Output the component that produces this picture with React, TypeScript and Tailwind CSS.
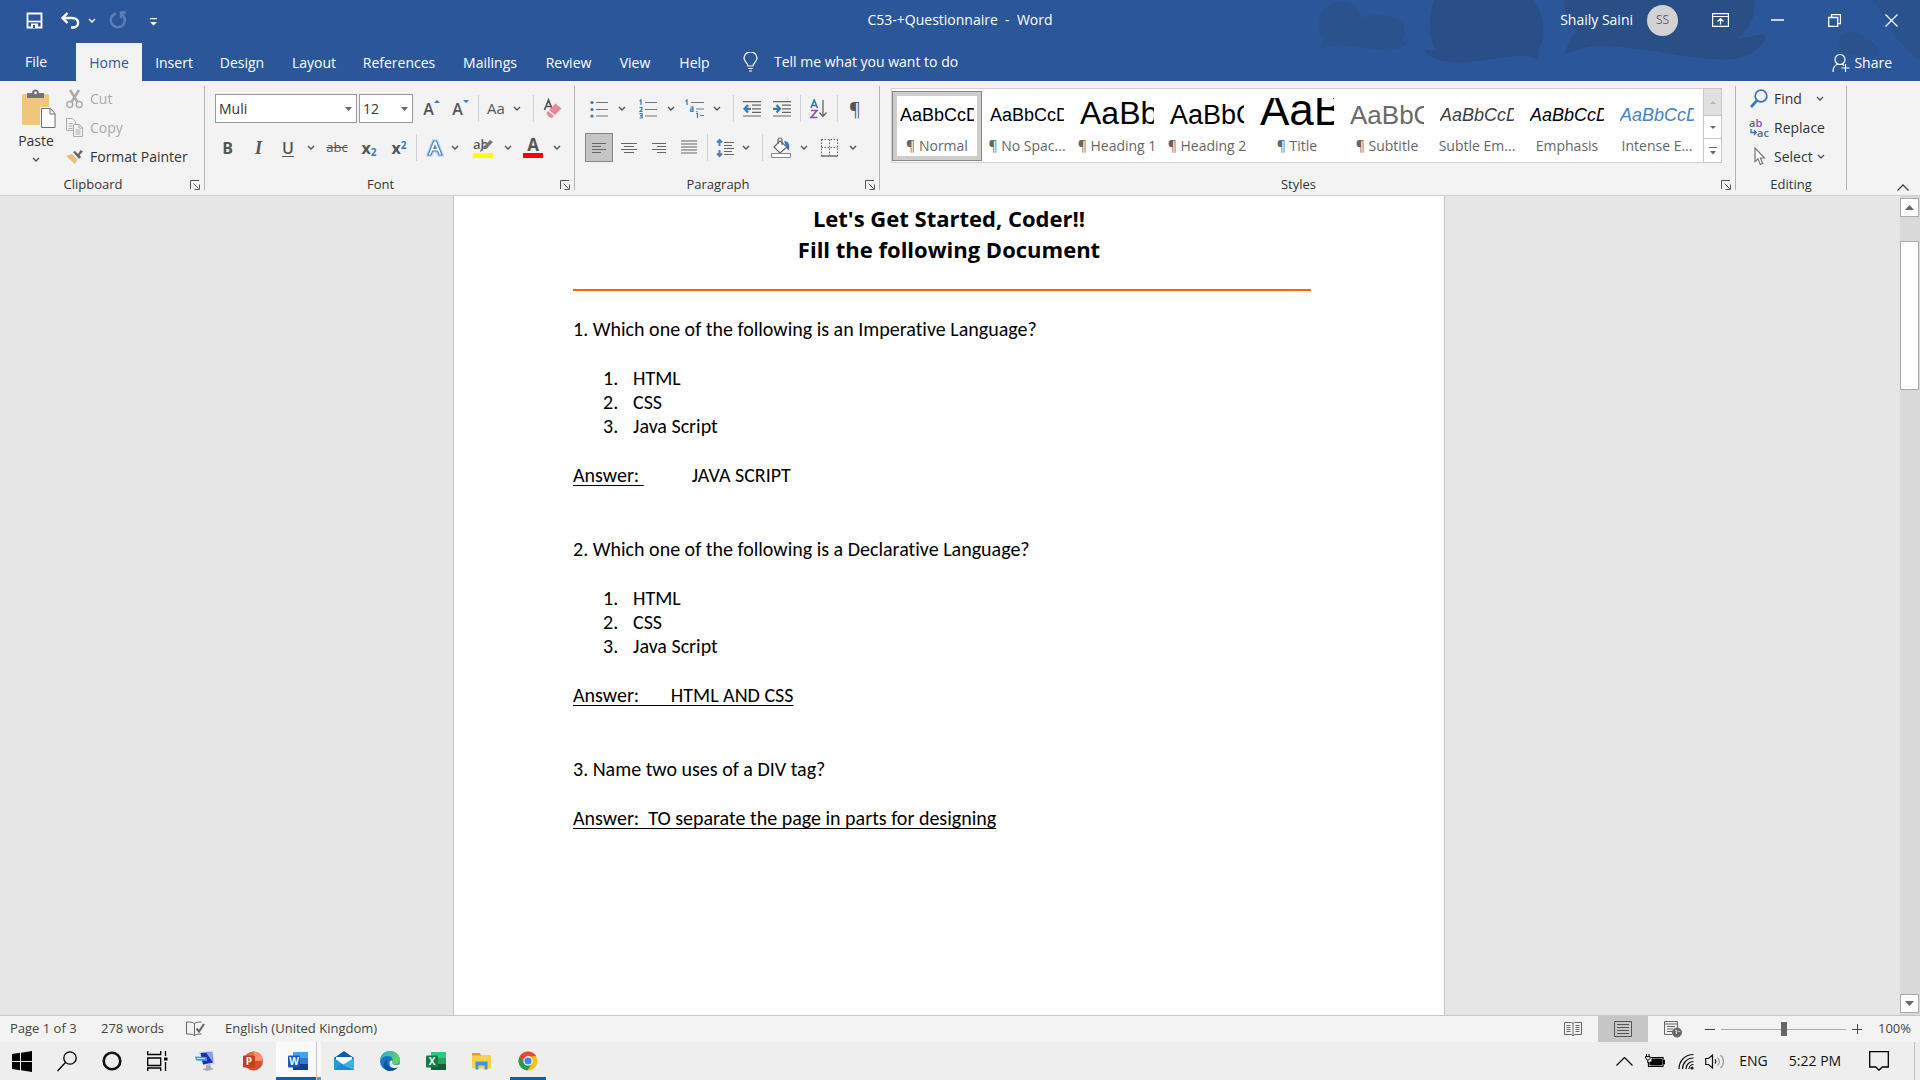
import React, { type ReactNode } from "react";

const UI = "font-['Open_Sans','Noto_Sans',sans-serif]";

function Chevron({ color = "#555" }: { color?: string }) {
  return (
    <svg width="8" height="5" viewBox="0 0 8 5" fill="none" className="shrink-0">
      <path d="M1 1l3 3 3-3" stroke={color} strokeWidth="1.4" />
    </svg>
  );
}

function Tool({ label, w, children, active = false }: { label: string; w: string; children: ReactNode; active?: boolean }) {
  return (
    <button
      type="button"
      aria-label={label}
      className={`flex h-[29px] shrink-0 items-center justify-center text-[#555] ${w} ${active ? "border border-[#868686] bg-[#c5c5c5]" : ""}`}
    >
      {children}
    </button>
  );
}

function Drop({ label, w }: { label: string; w: string }) {
  return (
    <Tool label={label} w={w}>
      <Chevron />
    </Tool>
  );
}

function Sep({ m = "" }: { m?: string }) {
  return <span className={`h-[27px] w-px shrink-0 bg-[#d2d2d2] ${m}`} />;
}

function Group({ title, w, children, launcher = true }: { title: string; w: string; children: ReactNode; launcher?: boolean }) {
  return (
    <section aria-label={title} className={`flex shrink-0 ${w}`}>
      <div className="flex min-w-0 flex-1 flex-col">
        <div className="flex-1">{children}</div>
        <div className="flex h-5 items-center">
          <span className={`flex-1 text-center text-[13px] text-[#333] ${launcher ? "pr-1" : ""}`}>{title}</span>
          {launcher && (
            <button type="button" aria-label={`${title} settings`} className="w-[14px]">
              <svg width="10" height="10" viewBox="0 0 10 10" fill="none" stroke="#555">
                <path d="M.5 9V.5H9M3.500 3.500l5 5M9.500 4.500v5h-5" />
              </svg>
            </button>
          )}
        </div>
      </div>
      <span className="mt-[5px] mb-[5px] w-px bg-[#b4b4b4]" />
    </section>
  );
}

/* ---------- Title bar ---------- */

function HeaderArt() {
  return (
    <svg className="absolute top-0 right-0 h-[81px] w-[640px] opacity-90" viewBox="0 0 640 81" fill="#2a4e84">
      <path d="M39 30C37 10 50 2 62 2c12 0 18 8 20 16 10-6 40-2 42 8 2 8-2 14-2 15 4 0 6 0 5 2-4 6-18 9-36 6-20-3-38-6-51 0 2-6 4-9 5-12-4-2-6-4-6-7z" opacity=".6" />
      <path d="M154 0h100c6 10 10 20 9 34-1 10-3 14-5 17 2 2 0 6 0 9-8-6-24-4-46-1-20 3-50 8-67-6l-1-4c6 2 10 1 12 1-10-16-6-36-2-50z" opacity=".9" />
      <path d="M284 0h190c2 14-2 26-16 38 14 0 18-4 26-3 4 2-1 8-5 12-8 10-24 14-50 12-40-4-80-14-110-13-16 1-26 4-34 9 2-12 8-20 12-25-8-4-12-14-13-30z" />
      <path d="M560 38c4-8 20-8 26 2 8 1 14 8 14 15-14 4-34 0-42-6-2-4 0-8 2-11zM592 0h48v60c-12-8-24-20-30-34-6-10-12-18-18-26z" opacity=".6" />
    </svg>
  );
}

function TitleBar() {
  return (
    <div className="relative flex h-10 items-center text-white">
      <div className="flex flex-1 items-center">
        <button type="button" aria-label="Save" className="ml-[26px] w-[34px]">
          <svg width="17" height="17" viewBox="0 0 17 17" fill="none" stroke="#fff">
            <path d="M1.500 1.500h14v14h-14z" strokeWidth="1.800" />
            <path d="M2 9.500h13" strokeWidth="1.600" />
            <path d="M5 11.500h7v4H5z" fill="#fff" stroke="none" />
            <path d="M7 13h2v3H7z" fill="#2b579a" stroke="none" />
          </svg>
        </button>
        <button type="button" aria-label="Undo" className="w-7">
          <svg width="20" height="17" viewBox="0 0 20 17" fill="none" stroke="#fff">
            <path d="M3 6h9c8 0 8 9 1 9.500h-2" strokeWidth="2.400" />
            <path d="M7.500 1L2.500 6l5 5" strokeWidth="2.400" />
          </svg>
        </button>
        <button type="button" aria-label="Undo history" className="w-[21px]"><Chevron color="#fff" /></button>
        <button type="button" aria-label="Repeat" className="w-[41px]">
          <svg width="18" height="18" viewBox="0 0 18 18" fill="none" stroke="#5d7fb4" strokeWidth="2.400">
            <path d="M7 2.500a7 7 0 1 0 5.500.8" />
            <path d="M17 1.500h-5v6" />
          </svg>
        </button>
        <button type="button" aria-label="Customise quick access" className="flex pt-1">
          <svg width="7" height="8" viewBox="0 0 7 8" fill="#fff"><path d="M0 0h7v1.200H0zM0 4h7L3.500 7.500z" /></svg>
        </button>
      </div>
      <h1 className="text-sm whitespace-pre">C53-+Questionnaire  -  Word</h1>
      <div className="relative flex flex-1 items-center justify-end">
        <span className="mr-3.5 text-sm">Shaily Saini</span>
        <button type="button" aria-label="Account" className="mr-[14px] flex size-[31px] items-center justify-center rounded-full bg-[#d2d2d2] text-[12px] text-[#666]">SS</button>
        <button type="button" aria-label="Ribbon display options" className="flex w-[57px] justify-center">
          <svg width="17" height="14" viewBox="0 0 17 14" fill="none" stroke="#fff" strokeWidth="1.200">
            <path d="M.6.6h15.800v12.800H.6zM.6 3.500h15.800M8.500 11.500V6M5.500 8.500l3-3 3 3" />
          </svg>
        </button>
        <button type="button" aria-label="Minimise" className="flex w-[57px] justify-center">
          <svg width="13" height="2" viewBox="0 0 13 2"><path d="M0 1h13" stroke="#fff" strokeWidth="1.500" /></svg>
        </button>
        <button type="button" aria-label="Restore" className="flex w-[57px] justify-center">
          <svg width="13" height="13" viewBox="0 0 13 13" fill="none" stroke="#fff" strokeWidth="1.300">
            <path d="M.7 3.500h9v9h-9zM3.500 3.500V.7h9v9H9.700" />
          </svg>
        </button>
        <button type="button" aria-label="Close" className="flex w-[57px] justify-center">
          <svg width="13" height="13" viewBox="0 0 13 13" stroke="#fff" strokeWidth="1.300"><path d="M.5.5l12 12M12.500.5l-12 12" /></svg>
        </button>
      </div>
    </div>
  );
}

const tabs = [
  { name: "Home", w: "w-[66px]" },
  { name: "Insert", w: "w-[64px]" },
  { name: "Design", w: "w-[72px]" },
  { name: "Layout", w: "w-[72px]" },
  { name: "References", w: "w-[98px]" },
  { name: "Mailings", w: "w-[84px]" },
  { name: "Review", w: "w-[73px]" },
  { name: "View", w: "w-[60px]" },
  { name: "Help", w: "w-[59px]" },
];

function TabBar() {
  return (
    <nav className="relative flex h-[41px] items-end text-sm text-white">
      <button type="button" className="h-[38px] w-[76px] pr-1">File</button>
      {tabs.map((t, i) => (
        <button key={t.name} type="button" className={`h-[38px] pt-0.5 ${t.w} ${i === 0 ? "bg-[#f3f3f3] text-[#2b579a]" : ""}`}>
          {t.name}
        </button>
      ))}
      <label className="flex h-[38px] flex-1 items-center pl-[19px]">
        <svg width="15" height="20" viewBox="0 0 15 20" fill="none" stroke="#fff" strokeWidth="1.200">
          <path d="M5 14c0-3-4-4-4-8a6.500 6 0 0 1 13 0c0 4-4 5-4 8zM5 16.500h5M6 19h3" />
        </svg>
        <input aria-label="Tell me what you want to do" placeholder="Tell me what you want to do" className="ml-4 w-60 bg-transparent outline-none placeholder:text-white" />
      </label>
      <button type="button" className="mr-[28px] flex h-[38px] items-center gap-1 pt-0.5">
        <svg width="18" height="20" viewBox="0 0 18 20" fill="none" stroke="#fff" strokeWidth="1.200">
          <circle cx="8" cy="6.500" r="5" />
          <path d="M1 19c0-4 2-7 5-8M10 11l2 1.500M13.500 11v8M9.500 15h8" />
        </svg>
        Share
      </button>
    </nav>
  );
}

/* ---------- Ribbon groups ---------- */

function ClipboardGroup() {
  return (
    <Group title="Clipboard" w="w-[205px]">
      <div className="flex pl-3">
        <button type="button" className="flex w-12 flex-col items-center pt-2 text-[13px] text-[#333]">
          <svg width="36" height="40" viewBox="0 0 36 40" className="ml-1">
            <rect x="2" y="5" width="27" height="31" rx="1.500" fill="#eec77c" />
            <path d="M7 9V4h5a3.500 3.500 0 0 1 7 0h5v5z" fill="#737373" />
            <circle cx="15.500" cy="3.800" r="1.400" fill="#f3f3f3" />
            <path d="M21.500 19.500h9l4.500 5v14h-13.500z" fill="#fff" stroke="#f3f3f3" strokeWidth="3" />
            <path d="M21.500 19.500h9l4.500 5v14h-13.500zM30 19.500v5.500h5" fill="#fff" stroke="#6f6f6f" />
          </svg>
          <span className="mt-0.5 text-sm">Paste</span>
          <span className="pt-1.5"><Chevron /></span>
        </button>
        <div className="flex flex-col pl-1.5 pt-[3px] text-sm">
          <button type="button" className="flex h-[29px] items-center gap-[7px] text-[#aaa]">
            <svg width="17" height="20" viewBox="0 0 17 20" fill="none" stroke="#aaa" strokeWidth="1.400">
              <circle cx="3.800" cy="15.500" r="3" /><circle cx="13.200" cy="15.500" r="3" />
              <path d="M4 1l7.500 12M13 1L5.500 13" strokeWidth="2.400" />
            </svg>
            Cut
          </button>
          <button type="button" className="flex h-[29px] items-center gap-[7px] text-[#aaa]">
            <svg width="17" height="19" viewBox="0 0 17 19" fill="#f3f3f3" stroke="#b0a8b0">
              <path d="M.5.5h6l3 3v9h-9z" /><path d="M2.500 5.500h4M2.500 8h4M2.500 10.500h4" />
              <path d="M7.500 6.500h6l3 3v9h-9zM13 6.500v3.500h3.500" /><path d="M9.500 12h5M9.500 14h5M9.500 16h5" />
            </svg>
            Copy
          </button>
          <button type="button" className="flex h-[29px] items-center gap-[7px] text-[#333]">
            <svg width="17" height="16" viewBox="0 0 17 16">
              <path d="M0 7l6-2 5.500 5.500L9 15z" fill="#e8bf7b" />
              <path d="M7 3l2-1 3 3 2.500-4L17 2.500 13.500 6l1.500 2-2 2z" fill="#666" />
            </svg>
            Format Painter
          </button>
        </div>
      </div>
    </Group>
  );
}

function Combo({ label, value, w }: { label: string; value: string; w: string }) {
  return (
    <div className={`flex h-[29px] items-center border border-[#999] bg-white pl-[3px] pr-1 ${w}`}>
      <input aria-label={label} defaultValue={value} className="min-w-0 flex-1 text-sm text-[#333] outline-none" />
      <button type="button" aria-label={`${label} list`}>
        <svg width="7" height="4" viewBox="0 0 7 4" fill="#666"><path d="M0 0h7L3.500 4z" /></svg>
      </button>
    </div>
  );
}

function FontGroup() {
  return (
    <Group title="Font" w="w-[370px]">
      <div className="flex items-center pl-[10px] pt-[13px]">
        <Combo label="Font" value="Muli" w="w-[142px]" />
        <span className="w-0.5" />
        <Combo label="Font size" value="12" w="w-[54px]" />
        <Tool label="Grow font" w="ml-1 w-[29px]">
          <span className="text-base font-semibold">A</span>
          <svg width="6" height="3" viewBox="0 0 6 3" className="mb-[15px]"><path d="M0 3h6L3 0z" fill="#3a78b8" /></svg>
        </Tool>
        <Tool label="Shrink font" w="w-[29px]">
          <span className="text-base font-semibold">A</span>
          <svg width="6" height="3" viewBox="0 0 6 3" className="mb-[15px]"><path d="M0 0h6L3 3z" fill="#3a78b8" /></svg>
        </Tool>
        <Sep m="ml-[3px]" />
        <Tool label="Change case" w="w-[34px]"><span className="text-[15px]">Aa</span></Tool>
        <Drop label="Change case options" w="w-2" />
        <Sep m="ml-3" />
        <Tool label="Clear formatting" w="w-9">
          <svg width="19" height="21" viewBox="0 0 19 21">
            <path d="M1.500 12L5.500 2l4 10M3 8.500h5" fill="none" stroke="#555" strokeWidth="1.700" />
            <path d="M12.500 5.500l6 5-6.500 6.500-6-5z" fill="#e8879a" />
            <path d="M5 13l6 5-2 2c-2 0-5-2.500-5.500-5z" fill="#e8879a" />
          </svg>
        </Tool>
      </div>
      <div className="flex items-center pl-[7px] pt-[10px]">
        <Tool label="Bold" w="w-[31px]"><b className="text-base">B</b></Tool>
        <Tool label="Italic" w="w-[31px]"><i className="font-['Liberation_Serif',serif] text-lg font-bold">I</i></Tool>
        <Tool label="Underline" w="w-7"><u className="text-base font-semibold underline-offset-2">U</u></Tool>
        <Drop label="Underline style" w="w-[18px]" />
        <Tool label="Strikethrough" w="w-[34px]"><s className="text-[13px]">abc</s></Tool>
        <Tool label="Subscript" w="w-[30px]"><b className="text-base">x<sub className="text-[10px] text-[#3a78b8]">2</sub></b></Tool>
        <Tool label="Superscript" w="w-[30px]"><b className="text-base">x<sup className="text-[10px] text-[#3a78b8]">2</sup></b></Tool>
        <Sep m="ml-0.5" />
        <Tool label="Text effects" w="ml-1 w-[28px]">
          <svg width="18" height="20" viewBox="0 0 18 20" fill="none">
            <path d="M2 17L7.500 3h3L16 17h-3l-1.500-4h-5L5 17z" stroke="#bcd6f0" strokeWidth="3.500" />
            <path d="M2 17L7.500 3h3L16 17h-3l-1.500-4h-5L5 17z" fill="#fff" stroke="#4a86c8" strokeWidth="1.200" />
            <path d="M9 6l-2 5h4z" fill="#4a86c8" />
          </svg>
        </Tool>
        <Drop label="Text effects options" w="w-3" />
        <Tool label="Text highlight colour" w="w-11">
          <span className="flex w-5 flex-col">
            <span className="relative h-4 text-left text-[13px] leading-[14px] font-semibold">
              ab
              <svg width="14" height="14" viewBox="0 0 14 14" className="absolute right-0 bottom-0"><path d="M1 13l1-4 3 2zM4 8l7-7 3 2-7 7z" fill="#777" /></svg>
            </span>
            <span className="h-[5px] bg-[#ffff00]" />
          </span>
        </Tool>
        <Drop label="Highlight options" w="w-1.5" />
        <Tool label="Font colour" w="w-11">
          <span className="flex w-5 flex-col">
            <b className="h-4 text-center text-[17px] leading-4">A</b>
            <span className="h-[5px] bg-[#ff0000]" />
          </span>
        </Tool>
        <Drop label="Font colour options" w="w-1" />
      </div>
    </Group>
  );
}

function Lines({ d }: { d: string }) {
  return (
    <svg width="18" height="15" viewBox="0 0 18 15" stroke="#666" fill="none"><path d={d} strokeWidth="1.200" /></svg>
  );
}

function ParagraphGroup() {
  return (
    <Group title="Paragraph" w="w-[305px]">
      <div className="flex items-center pl-[10px] pt-[13px]">
        <Tool label="Bullets" w="w-7">
          <svg width="19" height="18" viewBox="0 0 19 18">
            <path d="M6 2.500h12M6 9.500h12M6 16h12" stroke="#777" strokeWidth="1.200" />
            <circle cx="2" cy="2.500" r="1.600" fill="#3a78b8" /><circle cx="2" cy="9.500" r="1.600" fill="#3a78b8" /><circle cx="2" cy="16" r="1.600" fill="#3a78b8" />
          </svg>
        </Tool>
        <Drop label="Bullet library" w="w-[18px]" />
        <Tool label="Numbering" w="w-[34px]">
          <svg width="19" height="20" viewBox="0 0 19 20" fill="none">
            <path d="M6 3.500h12M6 10.500h12M6 17h12" stroke="#777" strokeWidth="1.200" />
            <path d="M.5 2l1.500-1v5M.5 8.500h2.500v1.500L1 12.500h2.500M.5 14.700h2.600v4.300H.5M1 16.900h2" stroke="#3a78b8" strokeWidth="1.200" />
          </svg>
        </Tool>
        <Drop label="Numbering library" w="w-3" />
        <Tool label="Multilevel list" w="w-9">
          <svg width="20" height="20" viewBox="0 0 20 20" fill="none">
            <path d="M6 3.500h13M11 10h8M15 16.500h4" stroke="#777" strokeWidth="1.200" />
            <path d="M.5 2L2 1v5M5.500 8H8v4.500H5.700v-2.300H8M11 14.500h1.500V19M12 12v1.200" stroke="#3a78b8" strokeWidth="1.200" />
          </svg>
        </Tool>
        <Drop label="Multilevel options" w="w-2" />
        <Sep m="ml-3" />
        <Tool label="Decrease indent" w="w-9">
          <svg width="18" height="16" viewBox="0 0 18 16" fill="none">
            <path d="M0 .6h18M9 4.200h9M9 7.800h9M9 11.400h9M0 15h18" stroke="#666" strokeWidth="1.200" />
            <path d="M8 7.800H2M5 4L1.500 7.800 5 11.600" stroke="#3a78b8" strokeWidth="2.200" />
          </svg>
        </Tool>
        <Tool label="Increase indent" w="w-6">
          <svg width="18" height="16" viewBox="0 0 18 16" fill="none">
            <path d="M0 .6h18M9 4.200h9M9 7.800h9M9 11.400h9M0 15h18" stroke="#666" strokeWidth="1.200" />
            <path d="M0 7.800h6M3.500 4L7 7.800l-3.500 3.800" stroke="#3a78b8" strokeWidth="2.200" />
          </svg>
        </Tool>
        <Sep m="ml-1.5" />
        <Tool label="Sort" w="w-9">
          <svg width="18" height="20" viewBox="0 0 18 20" fill="none" strokeWidth="1.600">
            <path d="M1 9l3.200-8L7.500 9M2 6.500h4.500" stroke="#3a78b8" />
            <path d="M1 11.500h6L1 18.500h6.500" stroke="#8f4fb0" />
            <path d="M13 1v16M9.500 13.500l3.500 4 3.500-4" stroke="#666" strokeWidth="1.300" />
          </svg>
        </Tool>
        <Sep />
        <Tool label="Show formatting marks" w="w-[34px]"><span className="text-lg leading-6">¶</span></Tool>
      </div>
      <div className="flex items-center pl-[10px] pt-[10px]">
        <Tool label="Align left" w="w-7" active><Lines d="M2 3.500h14M2 6.500h9M2 9.500h14M2 12.500h9" /></Tool>
        <Tool label="Centre" w="w-8"><Lines d="M1 3.500h16M4 6.500h10M1 9.500h16M4 12.500h10" /></Tool>
        <Tool label="Align right" w="w-7"><Lines d="M2 3.500h14M7 6.500h9M2 9.500h14M7 12.500h9" /></Tool>
        <Tool label="Justify" w="w-8"><Lines d="M1 1h16M1 4h16M1 7h16M1 10h16M1 13h16" /></Tool>
        <Sep m="ml-0.5" />
        <Tool label="Line spacing" w="w-[34px]">
          <svg width="18" height="20" viewBox="0 0 18 20" fill="none">
            <path d="M3.500 2v6M3.500 12v6M1 4.500L3.500 2 6 4.500M1 15.500L3.500 18 6 15.500" stroke="#4a7fc0" strokeWidth="2" />
            <path d="M8 4.500h10M8 7.500h8M8 10.500h10M8 13.500h8M8 16.500h10" stroke="#666" strokeWidth="1.200" />
          </svg>
        </Tool>
        <Drop label="Line spacing options" w="w-2" />
        <Sep m="ml-3" />
        <Tool label="Shading" w="w-9">
          <svg width="20" height="21" viewBox="0 0 20 21">
            <path d="M13 4c5 0 6 5 5 9l-2-1z" fill="#3a78b8" />
            <path d="M9 4l7 6-7 6-6-6z" fill="#fff" stroke="#666" strokeWidth="1.200" />
            <path d="M7 7V3a2 2 0 0 1 4 0v5" fill="none" stroke="#666" strokeWidth="1.200" />
            <path d="M.5 16.500h19v4H.5z" fill="#fff" stroke="#888" />
          </svg>
        </Tool>
        <Drop label="Shading options" w="w-[10px]" />
        <Tool label="Borders" w="w-10">
          <svg width="17" height="18" viewBox="0 0 17 18" fill="none" stroke="#666">
            <path d="M.5.5h16v16H.5z" fill="#fff" stroke="none" />
            <path d="M.5.5v16M16.500.5v16M8.500.5v16M.5.5h16M.5 8.500h16" strokeDasharray="1.500 1.500" />
            <path d="M0 17h17" strokeWidth="1.400" />
          </svg>
        </Tool>
        <Drop label="Border options" w="w-2" />
      </div>
    </Group>
  );
}

const styles = [
  { name: "¶ Normal", sample: "AaBbCcD", cls: "text-[18px] leading-[22px] text-black" },
  { name: "¶ No Spac...", sample: "AaBbCcD", cls: "text-[18px] leading-[22px] text-black" },
  { name: "¶ Heading 1", sample: "AaBb", cls: "text-[32px] leading-[26px] text-black" },
  { name: "¶ Heading 2", sample: "AaBbC", cls: "text-[27px] leading-[22px] text-black" },
  { name: "¶ Title", sample: "AaB", cls: "text-[44px] leading-[32px] text-black" },
  { name: "¶ Subtitle", sample: "AaBbC", cls: "text-[26px] leading-[22px] text-[#6a6a6a]" },
  { name: "Subtle Em...", sample: "AaBbCcD", cls: "text-[18px] leading-[22px] text-[#404040] italic" },
  { name: "Emphasis", sample: "AaBbCcD", cls: "text-[18px] leading-[22px] text-black italic" },
  { name: "Intense E...", sample: "AaBbCcD", cls: "text-[18px] leading-[22px] text-[#4a80c4] italic" },
];

function StylesGroup() {
  return (
    <Group title="Styles" w="w-[856px]">
      <div className="flex pl-[11px] pt-[7px]">
        <div className="flex h-[75px] w-[813px] items-center border border-[#d0d0d0] bg-white">
          {styles.map((s, i) => (
            <button
              key={s.name}
              type="button"
              className={`flex h-[70px] w-[90px] shrink-0 flex-col items-center ${i === 0 ? "border border-[#868686] ring-4 ring-[#cfcdc9] ring-inset" : "border border-transparent"}`}
            >
              <span className="mt-[6px] flex h-[28px] w-[74px] items-end overflow-hidden">
                <span className={`font-['Liberation_Sans',Arial,sans-serif] whitespace-nowrap ${s.cls}`}>{s.sample}</span>
              </span>
              <span className="mt-[10px] text-sm whitespace-nowrap text-[#666]">{s.name}</span>
            </button>
          ))}
        </div>
        <div className="-ml-px flex h-[75px] w-[19px] flex-col border border-[#c6c6c6] bg-white">
          <button type="button" aria-label="Previous styles" className="flex h-[26px] items-center justify-center bg-[#e1e1e1]">
            <svg width="6" height="3" viewBox="0 0 6 3"><path d="M0 3h6L3 0z" fill="#b8b8b8" /></svg>
          </button>
          <button type="button" aria-label="Next styles" className="flex h-6 items-center justify-center border-y border-[#c6c6c6]">
            <svg width="6" height="3" viewBox="0 0 6 3"><path d="M0 0h6L3 3z" fill="#666" /></svg>
          </button>
          <button type="button" aria-label="More styles" className="flex flex-1 items-center justify-center">
            <svg width="8" height="8" viewBox="0 0 8 8" fill="#666"><path d="M0 0h8v1H0zM1 4h6L4 7.500z" /></svg>
          </button>
        </div>
      </div>
    </Group>
  );
}

function EditingGroup() {
  return (
    <Group title="Editing" w="w-[111px]" launcher={false}>
      <div className="flex flex-col pl-[14px] pt-[3px] text-sm text-[#333]">
        <button type="button" className="flex h-[29px] items-center">
          <svg width="18" height="19" viewBox="0 0 18 19" fill="none" stroke="#3a78b8"><circle cx="11" cy="7" r="5.800" strokeWidth="1.800" /><path d="M7 11.500L1 18" strokeWidth="2.600" /></svg>
          <span className="ml-1.5">Find</span>
          <span className="ml-3.5"><Chevron /></span>
        </button>
        <button type="button" className="flex h-[29px] items-center">
          <span className="flex w-[18px] flex-col text-[11px] leading-[10px] font-semibold text-[#666]">
            <span className="-ml-px text-left">a<span className="text-[#8f4fb0]">b</span></span>
            <span className="flex items-center">
              <svg width="7" height="7" viewBox="0 0 7 7" fill="none" stroke="#3a78b8" strokeWidth="1.400" className="shrink-0"><path d="M1 0v3.500h5M4 1.200l2.200 2.300L4 6" /></svg>
              a<span className="text-[#3a78b8]">c</span>
            </span>
          </span>
          <span className="ml-1.5">Replace</span>
        </button>
        <button type="button" className="flex h-[29px] items-center">
          <svg width="18" height="19" viewBox="0 0 18 19" fill="#fff" stroke="#777" strokeWidth="1.200"><path d="M5 1v13.500l3-2.800 2.300 5.800 2.400-1-2.300-5.500H14.500z" /></svg>
          <span className="ml-1.5">Select</span>
          <span className="ml-1"><Chevron /></span>
        </button>
      </div>
    </Group>
  );
}

/* ---------- Document ---------- */

function Question({ text, options, children }: { text: string; options?: string[]; children: ReactNode }) {
  return (
    <section className="pb-[50px]">
      <p>{text}</p>
      {options && (
        <ol className="pt-[25px] pl-[30px]">
          {options.map((o, i) => (
            <li key={o} className="flex">
              <span className="w-[30px]">{i + 1}.</span>
              {o}
            </li>
          ))}
        </ol>
      )}
      <p className="pt-[25px] whitespace-pre decoration-1 underline-offset-[3px]">{children}</p>
    </section>
  );
}

const languages = ["HTML", "CSS", "Java Script"];

function DocumentArea() {
  return (
    <main className="flex min-h-0 flex-1 bg-[#e6e6e6]">
      <div className="flex min-w-0 flex-1 justify-center overflow-hidden pr-0.5">
        <article className="w-[992px] border-x border-[#c6c6c6] bg-white pt-[7px] text-black">
          <h2 className="text-center font-['Open_Sans','Noto_Sans',sans-serif] text-[22px] leading-[31px] font-bold">
            Let's Get Started, Coder!!
            <br />
            Fill the following Document
          </h2>
          <hr className="mt-6 mr-[133px] ml-[119px] border-t-2 border-[#ff6600]" />
          <div className="pt-[26px] pl-[119px] font-['Carlito','Lato',sans-serif] text-[20px] leading-6 [font-variant-ligatures:none]">
            <Question text="1. Which one of the following is an Imperative Language?" options={languages}>
              <u className="decoration-1">Answer: </u><span className="ml-12">JAVA SCRIPT</span>
            </Question>
            <Question text="2. Which one of the following is a Declarative Language?" options={languages}>
              <u className="decoration-1">{"Answer:       HTML AND CSS"}</u>
            </Question>
            <Question text="3. Name two uses of a DIV tag?">
              <u className="decoration-1">{"Answer:  TO separate the page in parts for designing"}</u>
            </Question>
          </div>
        </article>
      </div>
      <div className="flex w-5 flex-col items-start bg-[#dadada] pt-[2px] pb-[2px]">
        <button type="button" aria-label="Scroll up" className="flex h-[19px] w-[19px] items-center justify-center border border-[#ababab] bg-white">
          <svg width="9" height="5" viewBox="0 0 9 5"><path d="M0 5h9L4.500 0z" fill="#666" /></svg>
        </button>
        <div className="mt-6 h-[149px] w-[19px] border border-[#ababab] bg-white" />
        <span className="flex-1" />
        <button type="button" aria-label="Scroll down" className="flex h-[19px] w-[19px] items-center justify-center border border-[#ababab] bg-white">
          <svg width="9" height="5" viewBox="0 0 9 5"><path d="M0 0h9L4.500 5z" fill="#666" /></svg>
        </button>
      </div>
    </main>
  );
}

/* ---------- Status bar ---------- */

function StatusBar() {
  return (
    <footer className="flex h-[27px] items-center border-t border-[#c6c6c6] bg-[#f3f3f3] pl-[10px] text-[13px] text-[#444]">
      <span className="w-[91px]">Page 1 of 3</span>
      <span className="w-[85px]">278 words</span>
      <button type="button" aria-label="Proofing" className="w-[39px]">
        <svg width="19" height="16" viewBox="0 0 19 16" fill="none" stroke="#666">
          <path d="M8.500 2.500c-2-1.500-5-1.500-8-1.500v12c3 0 6 0 8 1.500zM8.500 2.500c2-1.500 4-1.500 7-1.500M8.500 14.500c1-1 3-1.500 7-1.500" />
          <path d="M10.500 7.500l2.500 3L18 3" strokeWidth="2" />
        </svg>
      </button>
      <span className="flex-1">English (United Kingdom)</span>
      <button type="button" aria-label="Read mode" className="flex w-[50px] justify-center">
        <svg width="18" height="15" viewBox="0 0 18 15" fill="none" stroke="#666">
          <path d="M.5.500h7l1.500 1 1.500-1h7v12h-7L9 14l-1.500-1.500h-7zM9 1.500V14" />
          <path d="M2.500 3.500h4M2.500 5.500h4M2.500 7.500h4M2.500 9.500h4M11.500 3.500h4M11.500 5.500h4M11.500 7.500h4M11.500 9.500h4" />
        </svg>
      </button>
      <button type="button" aria-label="Print layout" className="flex h-full w-[50px] items-center justify-center bg-[#c6c6c6]">
        <svg width="18" height="16" viewBox="0 0 18 16" fill="none" stroke="#555">
          <path d="M.5.500h17v15H.5zM3 3.500h12M3 6.500h12M3 9.500h12M3 12.500h12" />
        </svg>
      </button>
      <button type="button" aria-label="Web layout" className="flex w-[50px] justify-center">
        <svg width="18" height="17" viewBox="0 0 18 17" fill="none" stroke="#666">
          <path d="M8 13.500H.5V.500h13v6M.5 3h13M3 5.500h8M3 8h6M3 10.500h5" />
          <circle cx="13" cy="11.500" r="4.500" fill="#666" />
          <path d="M11 9l2 1-1 2 1 1M14.500 9.500l1 1.500" stroke="#f3f3f3" />
        </svg>
      </button>
      <button type="button" aria-label="Zoom out" className="ml-[7px] flex w-[16px]">
        <svg width="10" height="10" viewBox="0 0 10 10" stroke="#444"><path d="M0 5.500h10" /></svg>
      </button>
      <input
        type="range"
        aria-label="Zoom"
        min={0}
        max={100}
        defaultValue={50}
        className="h-[14px] w-[125px] appearance-none bg-[linear-gradient(#ababab,#ababab)] bg-[length:100%_1px] bg-center bg-no-repeat [&::-webkit-slider-thumb]:h-[14px] [&::-webkit-slider-thumb]:w-[6px] [&::-webkit-slider-thumb]:appearance-none [&::-webkit-slider-thumb]:bg-[#666]"
      />
      <button type="button" aria-label="Zoom in" className="ml-[6px] flex w-[26px]">
        <svg width="10" height="10" viewBox="0 0 10 10" stroke="#444"><path d="M0 5.500h10M5.500 0v10" /></svg>
      </button>
      <span className="w-[42px]">100%</span>
    </footer>
  );
}

/* ---------- Taskbar ---------- */

function OfficeIcon({ letter, tile, colors }: { letter: string; tile: string; colors: [string, string, string] }) {
  return (
    <svg width="20" height="20" viewBox="0 0 20 20">
      {letter === "P" ? (
        <g>
          <circle cx="10.500" cy="10" r="9.500" fill={colors[2]} />
          <path d="M10.500.500a9.500 9.500 0 0 1 9.500 9.500h-9.500z" fill={colors[1]} />
          <path d="M1 10a9.500 9.500 0 0 1 9.500-9.500V10z" fill={colors[0]} />
        </g>
      ) : (
        <g>
          <path d="M5 1h15v6H5z" fill={colors[0]} />
          <path d="M5 7h15v6H5z" fill={colors[1]} />
          <path d="M5 13h15v6H5z" fill={colors[2]} />
        </g>
      )}
      <rect x="0" y="4.500" width="12" height="12" rx="1" fill={tile} />
      <text x="6" y="14" textAnchor="middle" fontSize="10" fontWeight="700" fill="#fff">{letter}</text>
    </svg>
  );
}

const apps: { name: string; w: string; state?: "active" | "open"; icon: ReactNode }[] = [
  { name: "Start", w: "w-11", icon: <svg width="20" height="21" viewBox="0 0 20 21"><path d="M0 3l8-1.200V10H0zM9 1.700L20 0v10H9zM0 11h8v8.200L0 18zM9 11h11v10L9 19.300z" /></svg> },
  { name: "Search", w: "w-[46px]", icon: <svg width="20" height="21" viewBox="0 0 20 21" fill="none" stroke="#000" strokeWidth="1.300"><circle cx="13" cy="7" r="6.200" /><path d="M8.500 11.500L.5 20" /></svg> },
  { name: "Cortana", w: "w-11", icon: <svg width="20" height="20" viewBox="0 0 20 20" fill="none" stroke="#111" strokeWidth="2.600"><circle cx="10" cy="10" r="8.300" /></svg> },
  { name: "Task view", w: "w-[46px]", icon: <svg width="21" height="20" viewBox="0 0 21 20" fill="none" stroke="#000" strokeWidth="1.300"><path d="M.7 0v3.500h13V0M.7 7h13v7.500H.7zM.7 20v-3h13v3M18.500 0v5M18.500 11v9" /><path d="M17 6.500h3.500v3H17z" fill="#000" stroke="none" /></svg> },
  {
    name: "Remote desktop", w: "w-[50px]",
    icon: (
      <svg width="20" height="21" viewBox="0 0 20 21">
        <path d="M4 1l14-1 1.500 13-11 2z" fill="#c9d3e4" /><path d="M5.500 2l11.500-1 1 10.500-10 2z" fill="#1c2fb8" /><path d="M11 1.500l6-.5 1 10.500z" fill="#8aa2f0" />
        <path d="M0 5.500l12 .5v4L1 9.500z" fill="#3f9be8" /><path d="M2 7.500h8" stroke="#bfe2ff" /><path d="M11 14.500l4-1 1 3 3 1.500-7 2-5-1.500 4-1.500z" fill="#a5aab3" />
      </svg>
    ),
  },
  { name: "PowerPoint", w: "w-[46px]", icon: <OfficeIcon letter="P" tile="#c43e1c" colors={["#ed6c47", "#ff8f6b", "#d35230"]} /> },
  { name: "Word", w: "w-[41px] pl-1", state: "active", icon: <OfficeIcon letter="W" tile="#185abd" colors={["#41a5ee", "#2b7cd3", "#103f91"]} /> },
  {
    name: "Mail", w: "w-[46px]",
    icon: (
      <svg width="20" height="20" viewBox="0 0 20 20">
        <path d="M0 7l10-7 10 7v2H0z" fill="#0f5ea8" /><path d="M2 6h16v8H2z" fill="#fff" /><path d="M0 7l10 7-10 5z" fill="#1e9de0" /><path d="M20 7L0 19h20z" fill="#35b5ee" /><path d="M0 19l7-6 3 1.500L20 19z" fill="#1a8ad4" />
      </svg>
    ),
  },
  {
    name: "Edge", w: "w-[46px]",
    icon: (
      <svg width="20" height="20" viewBox="0 0 20 20">
        <defs><linearGradient id="edge" x1="0" x2="1" y1="0" y2=".3"><stop stopColor="#2aa6e0" /><stop offset="1" stopColor="#5fd45f" /></linearGradient></defs>
        <circle cx="10" cy="10" r="10" fill="#1377c9" />
        <path d="M0 10C0 4 4.500 0 10 0s10 4 10 8.500c0 3-2 5-5 5-2.500 0-3.500-1-3.500-2 0-.8 1-1 1-3C12.500 6 10 5 7.500 5 4 5 1 7 0 10z" fill="url(#edge)" />
        <path d="M8 9c-2 3 0 8 5 8 2 0 4-.7 5.300-1.800-1.500 3-5 4.800-8.300 4.800-4 0-7-3-6.500-6.500C4 11 6 9.500 8 9z" fill="#0c4f9e" />
        <path d="M12 11.500c0 1.500 1.500 2.500 3.500 2.500 2 0 3.500-.7 4-1l-1 3c-4 2-9 1-9-3.500 0-2 1-3 2-3 1 0 1.200 1 .5 2z" fill="#eee" />
      </svg>
    ),
  },
  { name: "Excel", w: "w-[46px]", icon: <OfficeIcon letter="X" tile="#107c41" colors={["#33c481", "#21a366", "#185c37"]} /> },
  {
    name: "File Explorer", w: "w-11",
    icon: (
      <svg width="19" height="18" viewBox="0 0 19 18">
        <path d="M0 3h19v13.500H0z" fill="#fcd04b" /><path d="M0 1h8l1 2.500H0z" fill="#e0a21a" /><path d="M3.500 17.500V9.500h12v8h-3v-4h-6v4z" fill="#3c96dc" />
      </svg>
    ),
  },
  {
    name: "Chrome", w: "w-[50px]", state: "open",
    icon: (
      <svg width="20" height="20" viewBox="0 0 20 20">
        <circle cx="10" cy="10" r="9.500" fill="#fbc116" />
        <path d="M1.700 5.300A9.500 9.500 0 0 1 18.300 5.300H10L6 12.500z" fill="#dd4b3e" />
        <path d="M1.700 5.300A9.500 9.500 0 0 0 9.500 19.500L14 12.300 6 12.300z" fill="#279a50" />
        <circle cx="10" cy="10" r="4.700" fill="#fff" /><circle cx="10" cy="10" r="3.600" fill="#4285f4" />
      </svg>
    ),
  },
];

function Taskbar() {
  return (
    <div className="flex h-[38px] items-stretch bg-[#eeeeee] text-[#111]">
      {apps.map((a) => (
        <React.Fragment key={a.name}>
          <button
            type="button"
            aria-label={a.name}
            className={`relative flex items-center justify-center ${a.w} ${a.state === "active" ? "border-r border-[#c8c8c8] bg-[#fafafa]" : ""}`}
          >
            {a.icon}
            {a.state === "active" && <span className="absolute inset-x-0 bottom-0 h-[3px] bg-[#0063b1]" />}
            {a.state === "open" && <span className="absolute inset-x-[7px] bottom-0 h-[3px] bg-[#0063b1]" />}
          </button>
          {a.state === "active" && <span className="flex w-1 items-end bg-[#f8f8f8]"><span className="h-[3px] w-full bg-[#5c9ccf]" /></span>}
        </React.Fragment>
      ))}
      <span className="flex-1" />
      <button type="button" aria-label="Show hidden icons" className="flex w-[30px] items-center justify-center">
        <svg width="17" height="9" viewBox="0 0 17 9" fill="none" stroke="#111" strokeWidth="1.300"><path d="M.5 8.500l8-8 8 8" /></svg>
      </button>
      <button type="button" aria-label="Battery" className="flex w-8 items-center justify-center">
        <svg width="20" height="14" viewBox="0 0 20 14" fill="none" stroke="#000">
          <path d="M5.500 3.500h12.500v9H3.500V8" strokeWidth="1.200" /><path d="M7 5h9.500v6H5V8h2z" fill="#000" /><path d="M18.500 6h1v4h-1z" fill="#000" />
          <path d="M1.500 0v2M4 0v2M.5 2.500h4.500v2L3.500 6h-1L.8 4.500zM2.800 6v3" />
        </svg>
      </button>
      <button type="button" aria-label="Network" className="flex w-[30px] items-center justify-center">
        <svg width="16" height="17" viewBox="0 0 16 17" fill="none" stroke="#111" strokeWidth="1.200">
          <path d="M1 16C1 8 7 1.500 15.500 1.500M4.500 16C4.500 10 9 5 15.500 5M8 16c0-4 3-7.500 7.500-7.500M11 16c0-2.500 2-4.500 4.500-4.500" /><circle cx="14" cy="15" r="1.600" fill="#111" stroke="none" />
        </svg>
      </button>
      <button type="button" aria-label="Volume" className="flex w-[28px] items-center justify-center">
        <svg width="20" height="17" viewBox="0 0 20 17" fill="none" stroke="#111" strokeWidth="1.200">
          <path d="M.7 5.500h2.800L7.500 2v13l-4-3.500H.7zM10 6.500c1 1 1 3 0 4" /><path d="M12.500 4.500c2.500 2 2.500 6 0 8M15.500 2c4 3.500 4 9.500 0 13" stroke="#999" />
        </svg>
      </button>
      <button type="button" className="flex w-[49px] items-center justify-center text-sm">ENG</button>
      <button type="button" className="flex w-[74px] items-center justify-center text-sm">5:22 PM</button>
      <button type="button" aria-label="Notifications" className="flex w-[53px] items-center justify-center">
        <svg width="20" height="20" viewBox="0 0 20 20" fill="none" stroke="#000" strokeWidth="1.300"><path d="M.7.700h18.600v15.300h-6l-3.300 3-3.300-3h-6z" /></svg>
      </button>
      <span className="ml-[9px] w-[6px] border-l border-[#c0c0c0]" />
    </div>
  );
}

export default function App() {
  return (
    <div className={`flex h-screen flex-col overflow-hidden bg-[#e6e6e6] ${UI}`}>
      <header className="relative bg-[#2b579a]">
        <HeaderArt />
        <TitleBar />
        <TabBar />
      </header>
      <div className="flex h-[115px] border-b border-[#d0d0d0] bg-[#f3f3f3]">
        <ClipboardGroup />
        <FontGroup />
        <ParagraphGroup />
        <StylesGroup />
        <EditingGroup />
        <div className="flex flex-1 items-end justify-end pr-[11px] pb-1">
          <button type="button" aria-label="Collapse the ribbon">
            <svg width="12" height="7" viewBox="0 0 12 7" fill="none" stroke="#444" strokeWidth="1.300"><path d="M.5 6.500L6 1l5.500 5.500" /></svg>
          </button>
        </div>
      </div>
      <DocumentArea />
      <StatusBar />
      <Taskbar />
    </div>
  );
}
